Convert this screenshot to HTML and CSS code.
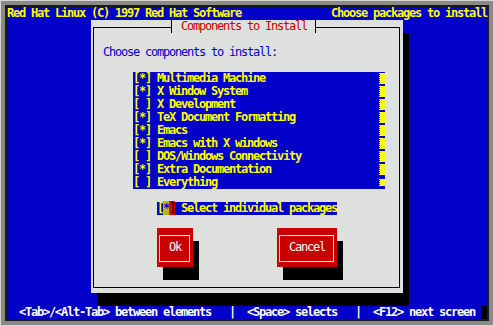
FILE: index.html
```html
<!DOCTYPE html>
<html lang="en">
<head>
<meta charset="utf-8">
<title>Components to Install</title>
<link rel="stylesheet" href="styles.css">
</head>
<body>
<div class="frame">
  <div class="bezel">
    <div class="screen">
      <div class="row topbar"><span>Red Hat Linux (C) 1997 Red Hat Software</span><span>Choose packages to install</span></div>
      <div class="desk">
        <div class="dialog">
          <div class="title-row"><span class="title">Components to Install</span></div>
          <div class="prompt">Choose components to install:</div>
          <div class="listbox">
            <ul class="items">
              <li>[*] Multimedia Machine</li>
              <li>[*] X Window System</li>
              <li>[ ] X Development</li>
              <li>[*] TeX Document Formatting</li>
              <li>[*] Emacs</li>
              <li>[*] Emacs with X windows</li>
              <li>[ ] DOS/Windows Connectivity</li>
              <li>[*] Extra Documentation</li>
              <li>[ ] Everything</li>
            </ul>
            <div class="scrollbar">
              <span class="trough"></span>
              <span class="trough"></span>
              <span class="trough"></span>
              <span class="trough"></span>
              <span class="trough"></span>
              <span class="trough"></span>
              <span class="trough"></span>
              <span class="trough"></span>
              <span class="thumb"></span>
            </div>
          </div>
          <div class="checkbox"><span>[</span><span class="cb-mark">*</span><span class="cb-close">]</span> Select individual packages</div>
          <div class="buttons">
            <button class="btn btn-ok" type="button">Ok</button>
            <button class="btn btn-cancel" type="button">Cancel</button>
          </div>
        </div>
      </div>
      <div class="row helpline"><span class="help-text">  &lt;Tab&gt;/&lt;Alt-Tab&gt; between elements   |  &lt;Space&gt; selects   |  &lt;F12&gt; next screen</span><span class="help-end"></span></div>
    </div>
  </div>
</div>
</body>
</html>
```
FILE: styles.css
```css
* {
  box-sizing: border-box;
  margin: 0;
  padding: 0;
}

html,
body {
  background: #d6d6d6;
}

body {
  width: 494px;
  height: 326px;
  overflow: hidden;
}

.frame {
  width: 494px;
  height: 326px;
  padding: 1px;
  background: #d6d6d6;
}

.bezel {
  height: 100%;
  border: 4px solid #8a8a8a;
}

.screen {
  height: 100%;
  border: 2px solid #1a1a1a;
  background: #0000c8;
  display: flex;
  flex-direction: column;
  font-family: "DejaVu Sans Mono", "Liberation Mono", monospace;
  font-size: 12px;
  line-height: 13px;
  letter-spacing: -1.2246px;
}

.row {
  height: 13px;
  display: flex;
  flex: none;
}

.row span,
.title,
.prompt,
.items li,
.checkbox {
  white-space: pre;
}

.topbar {
  justify-content: space-between;
  color: #ffff00;
  font-weight: bold;
}

.desk {
  flex: 1;
  padding-left: 84px;
}

.dialog {
  position: relative;
  width: 312px;
  height: 273px;
  background: #dde0dc;
  box-shadow: 6px 13px 0 #000;
  display: flex;
  flex-direction: column;
  align-items: flex-start;
}

.dialog::before {
  content: "";
  position: absolute;
  left: 2px;
  top: 7px;
  right: 3px;
  bottom: 5px;
  border: 1px solid #000;
}

.title-row {
  height: 13px;
  padding-left: 80px;
  position: relative;
  z-index: 1;
}

.title {
  display: block;
  height: 13px;
  padding-left: 9px;
  padding-right: 8px;
  border-left: 1px solid #000;
  border-right: 1px solid #000;
  background: #dde0dc;
  color: #c80000;
}

.prompt {
  margin-top: 13px;
  margin-left: 12px;
  height: 13px;
  color: #0000c8;
}

.listbox {
  margin-top: 13px;
  margin-left: 42px;
  width: 252px;
  height: 117px;
  display: flex;
  background: #0000c8;
}

.items {
  list-style: none;
  flex: 1;
  color: #ffff00;
  font-weight: bold;
}

.items li {
  height: 13px;
}

.scrollbar {
  width: 6px;
  display: flex;
  flex-direction: column;
}

.trough,
.thumb {
  position: relative;
  height: 13px;
}

.trough::before,
.thumb::before {
  content: "";
  position: absolute;
  left: 0;
  right: 0;
  top: 1px;
  bottom: 1px;
  background:
    linear-gradient(to right, transparent 1px, #ffff00 1px),
    repeating-linear-gradient(to bottom, #ffff00 0 1px, #0000c8 1px 2px);
}

.thumb::before {
  top: 3px;
  bottom: 3px;
}

.checkbox {
  margin-top: 13px;
  margin-left: 66px;
  height: 13px;
  background: #0000c8;
  color: #ffff00;
  font-weight: bold;
}

.cb-mark {
  background: #b8b800;
  color: #0000c8;
}

.cb-close {
  background: #e00000;
  color: #300000;
}

.buttons {
  margin-top: 13px;
  margin-left: 66px;
  display: flex;
  gap: 84px;
}

.btn {
  position: relative;
  height: 39px;
  border: 0;
  background: #c80000;
  color: #ffffff;
  font: inherit;
  letter-spacing: inherit;
  line-height: 39px;
  text-align: center;
  box-shadow: 6px 13px 0 #000;
}

.btn::before {
  content: "";
  position: absolute;
  left: 2px;
  top: 7px;
  right: 3px;
  bottom: 5px;
  border: 1px solid #f4e6e6;
}

.btn-ok {
  width: 36px;
}

.btn-cancel {
  width: 60px;
}

.helpline {
  color: #ffffff;
  font-weight: bold;
}

.help-text {
  flex: 1;
}

.help-end {
  width: 6px;
  background: #000;
}
```
